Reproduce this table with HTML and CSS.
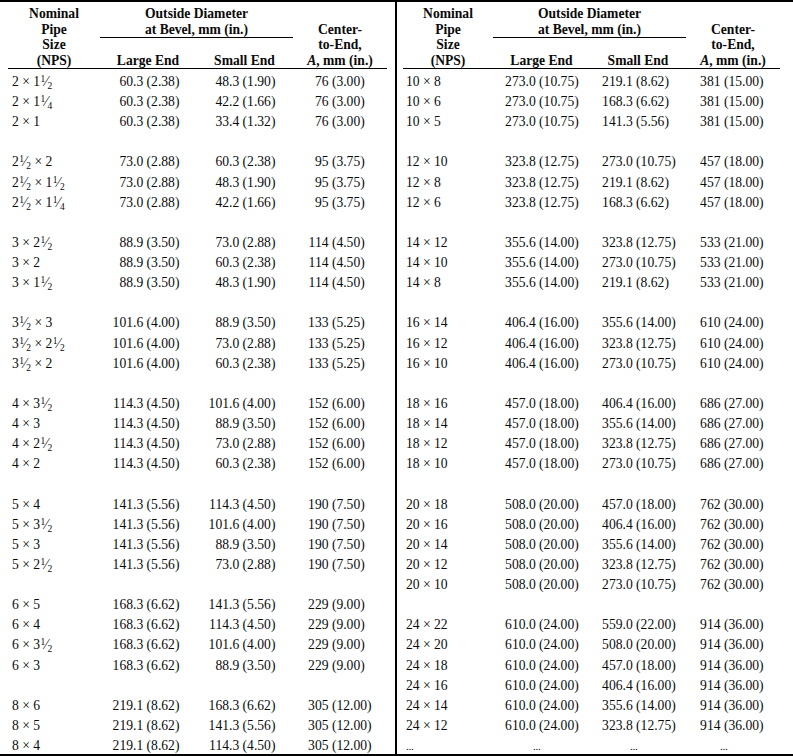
FILE: index.html
```html
<!DOCTYPE html>
<html>
<head>
<meta charset="utf-8">
<link rel="stylesheet" href="styles.css">
</head>
<body>
<div class="sheet">
  <div class="half left">
    <table class="tbl">
      <colgroup><col class="w1"><col class="w2"><col class="w3"><col class="w4"></colgroup>
      <thead>
        <tr class="r1">
          <th rowspan="2" class="hb">Nominal<br>Pipe<br>Size<br>(NPS)</th>
          <th colspan="2" class="grp">Outside Diameter<br>at Bevel, mm (in.)</th>
          <th rowspan="2" class="hb">Center-<br>to-End,<br><i>A</i>, mm (in.)</th>
        </tr>
        <tr class="r2"><th class="hb">Large End</th><th class="hb">Small End</th></tr>
      </thead>
      <tbody>
        <tr><td class="nps">2 × 1<span class="fr"><sup>1</sup>⁄<sub>2</sub></span></td><td class="n"><span class="i">60</span>.3 (2.38)</td><td class="n"><span class="i">48</span>.3 (1.90)</td><td class="n c"><span class="i">76</span> (3.00)</td></tr>
        <tr><td class="nps">2 × 1<span class="fr"><sup>1</sup>⁄<sub>4</sub></span></td><td class="n"><span class="i">60</span>.3 (2.38)</td><td class="n"><span class="i">42</span>.2 (1.66)</td><td class="n c"><span class="i">76</span> (3.00)</td></tr>
        <tr><td class="nps">2 × 1</td><td class="n"><span class="i">60</span>.3 (2.38)</td><td class="n"><span class="i">33</span>.4 (1.32)</td><td class="n c"><span class="i">76</span> (3.00)</td></tr>
        <tr><td></td><td></td><td></td><td></td></tr>
        <tr><td class="nps">2<span class="fr"><sup>1</sup>⁄<sub>2</sub></span> × 2</td><td class="n"><span class="i">73</span>.0 (2.88)</td><td class="n"><span class="i">60</span>.3 (2.38)</td><td class="n c"><span class="i">95</span> (3.75)</td></tr>
        <tr><td class="nps">2<span class="fr"><sup>1</sup>⁄<sub>2</sub></span> × 1<span class="fr"><sup>1</sup>⁄<sub>2</sub></span></td><td class="n"><span class="i">73</span>.0 (2.88)</td><td class="n"><span class="i">48</span>.3 (1.90)</td><td class="n c"><span class="i">95</span> (3.75)</td></tr>
        <tr><td class="nps">2<span class="fr"><sup>1</sup>⁄<sub>2</sub></span> × 1<span class="fr"><sup>1</sup>⁄<sub>4</sub></span></td><td class="n"><span class="i">73</span>.0 (2.88)</td><td class="n"><span class="i">42</span>.2 (1.66)</td><td class="n c"><span class="i">95</span> (3.75)</td></tr>
        <tr><td></td><td></td><td></td><td></td></tr>
        <tr><td class="nps">3 × 2<span class="fr"><sup>1</sup>⁄<sub>2</sub></span></td><td class="n"><span class="i">88</span>.9 (3.50)</td><td class="n"><span class="i">73</span>.0 (2.88)</td><td class="n c"><span class="i">114</span> (4.50)</td></tr>
        <tr><td class="nps">3 × 2</td><td class="n"><span class="i">88</span>.9 (3.50)</td><td class="n"><span class="i">60</span>.3 (2.38)</td><td class="n c"><span class="i">114</span> (4.50)</td></tr>
        <tr><td class="nps">3 × 1<span class="fr"><sup>1</sup>⁄<sub>2</sub></span></td><td class="n"><span class="i">88</span>.9 (3.50)</td><td class="n"><span class="i">48</span>.3 (1.90)</td><td class="n c"><span class="i">114</span> (4.50)</td></tr>
        <tr><td></td><td></td><td></td><td></td></tr>
        <tr><td class="nps">3<span class="fr"><sup>1</sup>⁄<sub>2</sub></span> × 3</td><td class="n"><span class="i">101</span>.6 (4.00)</td><td class="n"><span class="i">88</span>.9 (3.50)</td><td class="n c"><span class="i">133</span> (5.25)</td></tr>
        <tr><td class="nps">3<span class="fr"><sup>1</sup>⁄<sub>2</sub></span> × 2<span class="fr"><sup>1</sup>⁄<sub>2</sub></span></td><td class="n"><span class="i">101</span>.6 (4.00)</td><td class="n"><span class="i">73</span>.0 (2.88)</td><td class="n c"><span class="i">133</span> (5.25)</td></tr>
        <tr><td class="nps">3<span class="fr"><sup>1</sup>⁄<sub>2</sub></span> × 2</td><td class="n"><span class="i">101</span>.6 (4.00)</td><td class="n"><span class="i">60</span>.3 (2.38)</td><td class="n c"><span class="i">133</span> (5.25)</td></tr>
        <tr><td></td><td></td><td></td><td></td></tr>
        <tr><td class="nps">4 × 3<span class="fr"><sup>1</sup>⁄<sub>2</sub></span></td><td class="n"><span class="i">114</span>.3 (4.50)</td><td class="n"><span class="i">101</span>.6 (4.00)</td><td class="n c"><span class="i">152</span> (6.00)</td></tr>
        <tr><td class="nps">4 × 3</td><td class="n"><span class="i">114</span>.3 (4.50)</td><td class="n"><span class="i">88</span>.9 (3.50)</td><td class="n c"><span class="i">152</span> (6.00)</td></tr>
        <tr><td class="nps">4 × 2<span class="fr"><sup>1</sup>⁄<sub>2</sub></span></td><td class="n"><span class="i">114</span>.3 (4.50)</td><td class="n"><span class="i">73</span>.0 (2.88)</td><td class="n c"><span class="i">152</span> (6.00)</td></tr>
        <tr><td class="nps">4 × 2</td><td class="n"><span class="i">114</span>.3 (4.50)</td><td class="n"><span class="i">60</span>.3 (2.38)</td><td class="n c"><span class="i">152</span> (6.00)</td></tr>
        <tr><td></td><td></td><td></td><td></td></tr>
        <tr><td class="nps">5 × 4</td><td class="n"><span class="i">141</span>.3 (5.56)</td><td class="n"><span class="i">114</span>.3 (4.50)</td><td class="n c"><span class="i">190</span> (7.50)</td></tr>
        <tr><td class="nps">5 × 3<span class="fr"><sup>1</sup>⁄<sub>2</sub></span></td><td class="n"><span class="i">141</span>.3 (5.56)</td><td class="n"><span class="i">101</span>.6 (4.00)</td><td class="n c"><span class="i">190</span> (7.50)</td></tr>
        <tr><td class="nps">5 × 3</td><td class="n"><span class="i">141</span>.3 (5.56)</td><td class="n"><span class="i">88</span>.9 (3.50)</td><td class="n c"><span class="i">190</span> (7.50)</td></tr>
        <tr><td class="nps">5 × 2<span class="fr"><sup>1</sup>⁄<sub>2</sub></span></td><td class="n"><span class="i">141</span>.3 (5.56)</td><td class="n"><span class="i">73</span>.0 (2.88)</td><td class="n c"><span class="i">190</span> (7.50)</td></tr>
        <tr><td></td><td></td><td></td><td></td></tr>
        <tr><td class="nps">6 × 5</td><td class="n"><span class="i">168</span>.3 (6.62)</td><td class="n"><span class="i">141</span>.3 (5.56)</td><td class="n c"><span class="i">229</span> (9.00)</td></tr>
        <tr><td class="nps">6 × 4</td><td class="n"><span class="i">168</span>.3 (6.62)</td><td class="n"><span class="i">114</span>.3 (4.50)</td><td class="n c"><span class="i">229</span> (9.00)</td></tr>
        <tr><td class="nps">6 × 3<span class="fr"><sup>1</sup>⁄<sub>2</sub></span></td><td class="n"><span class="i">168</span>.3 (6.62)</td><td class="n"><span class="i">101</span>.6 (4.00)</td><td class="n c"><span class="i">229</span> (9.00)</td></tr>
        <tr><td class="nps">6 × 3</td><td class="n"><span class="i">168</span>.3 (6.62)</td><td class="n"><span class="i">88</span>.9 (3.50)</td><td class="n c"><span class="i">229</span> (9.00)</td></tr>
        <tr><td></td><td></td><td></td><td></td></tr>
        <tr><td class="nps">8 × 6</td><td class="n"><span class="i">219</span>.1 (8.62)</td><td class="n"><span class="i">168</span>.3 (6.62)</td><td class="n c"><span class="i">305</span> (12.00)</td></tr>
        <tr><td class="nps">8 × 5</td><td class="n"><span class="i">219</span>.1 (8.62)</td><td class="n"><span class="i">141</span>.3 (5.56)</td><td class="n c"><span class="i">305</span> (12.00)</td></tr>
        <tr><td class="nps">8 × 4</td><td class="n"><span class="i">219</span>.1 (8.62)</td><td class="n"><span class="i">114</span>.3 (4.50)</td><td class="n c"><span class="i">305</span> (12.00)</td></tr>
      </tbody>
    </table>
  </div>
  <div class="half right">
    <table class="tbl">
      <colgroup><col class="v1"><col class="v2"><col class="v3"><col class="v4"></colgroup>
      <thead>
        <tr class="r1">
          <th rowspan="2" class="hb">Nominal<br>Pipe<br>Size<br>(NPS)</th>
          <th colspan="2" class="grp">Outside Diameter<br>at Bevel, mm (in.)</th>
          <th rowspan="2" class="hb">Center-<br>to-End,<br><i>A</i>, mm (in.)</th>
        </tr>
        <tr class="r2"><th class="hb">Large End</th><th class="hb">Small End</th></tr>
      </thead>
      <tbody>
        <tr><td class="nps">10 × 8</td><td class="n"><span class="i">273</span>.0 (10.75)</td><td class="n"><span class="i">219</span>.1 (8.62)</td><td class="n c"><span class="i">381</span> (15.00)</td></tr>
        <tr><td class="nps">10 × 6</td><td class="n"><span class="i">273</span>.0 (10.75)</td><td class="n"><span class="i">168</span>.3 (6.62)</td><td class="n c"><span class="i">381</span> (15.00)</td></tr>
        <tr><td class="nps">10 × 5</td><td class="n"><span class="i">273</span>.0 (10.75)</td><td class="n"><span class="i">141</span>.3 (5.56)</td><td class="n c"><span class="i">381</span> (15.00)</td></tr>
        <tr><td></td><td></td><td></td><td></td></tr>
        <tr><td class="nps">12 × 10</td><td class="n"><span class="i">323</span>.8 (12.75)</td><td class="n"><span class="i">273</span>.0 (10.75)</td><td class="n c"><span class="i">457</span> (18.00)</td></tr>
        <tr><td class="nps">12 × 8</td><td class="n"><span class="i">323</span>.8 (12.75)</td><td class="n"><span class="i">219</span>.1 (8.62)</td><td class="n c"><span class="i">457</span> (18.00)</td></tr>
        <tr><td class="nps">12 × 6</td><td class="n"><span class="i">323</span>.8 (12.75)</td><td class="n"><span class="i">168</span>.3 (6.62)</td><td class="n c"><span class="i">457</span> (18.00)</td></tr>
        <tr><td></td><td></td><td></td><td></td></tr>
        <tr><td class="nps">14 × 12</td><td class="n"><span class="i">355</span>.6 (14.00)</td><td class="n"><span class="i">323</span>.8 (12.75)</td><td class="n c"><span class="i">533</span> (21.00)</td></tr>
        <tr><td class="nps">14 × 10</td><td class="n"><span class="i">355</span>.6 (14.00)</td><td class="n"><span class="i">273</span>.0 (10.75)</td><td class="n c"><span class="i">533</span> (21.00)</td></tr>
        <tr><td class="nps">14 × 8</td><td class="n"><span class="i">355</span>.6 (14.00)</td><td class="n"><span class="i">219</span>.1 (8.62)</td><td class="n c"><span class="i">533</span> (21.00)</td></tr>
        <tr><td></td><td></td><td></td><td></td></tr>
        <tr><td class="nps">16 × 14</td><td class="n"><span class="i">406</span>.4 (16.00)</td><td class="n"><span class="i">355</span>.6 (14.00)</td><td class="n c"><span class="i">610</span> (24.00)</td></tr>
        <tr><td class="nps">16 × 12</td><td class="n"><span class="i">406</span>.4 (16.00)</td><td class="n"><span class="i">323</span>.8 (12.75)</td><td class="n c"><span class="i">610</span> (24.00)</td></tr>
        <tr><td class="nps">16 × 10</td><td class="n"><span class="i">406</span>.4 (16.00)</td><td class="n"><span class="i">273</span>.0 (10.75)</td><td class="n c"><span class="i">610</span> (24.00)</td></tr>
        <tr><td></td><td></td><td></td><td></td></tr>
        <tr><td class="nps">18 × 16</td><td class="n"><span class="i">457</span>.0 (18.00)</td><td class="n"><span class="i">406</span>.4 (16.00)</td><td class="n c"><span class="i">686</span> (27.00)</td></tr>
        <tr><td class="nps">18 × 14</td><td class="n"><span class="i">457</span>.0 (18.00)</td><td class="n"><span class="i">355</span>.6 (14.00)</td><td class="n c"><span class="i">686</span> (27.00)</td></tr>
        <tr><td class="nps">18 × 12</td><td class="n"><span class="i">457</span>.0 (18.00)</td><td class="n"><span class="i">323</span>.8 (12.75)</td><td class="n c"><span class="i">686</span> (27.00)</td></tr>
        <tr><td class="nps">18 × 10</td><td class="n"><span class="i">457</span>.0 (18.00)</td><td class="n"><span class="i">273</span>.0 (10.75)</td><td class="n c"><span class="i">686</span> (27.00)</td></tr>
        <tr><td></td><td></td><td></td><td></td></tr>
        <tr><td class="nps">20 × 18</td><td class="n"><span class="i">508</span>.0 (20.00)</td><td class="n"><span class="i">457</span>.0 (18.00)</td><td class="n c"><span class="i">762</span> (30.00)</td></tr>
        <tr><td class="nps">20 × 16</td><td class="n"><span class="i">508</span>.0 (20.00)</td><td class="n"><span class="i">406</span>.4 (16.00)</td><td class="n c"><span class="i">762</span> (30.00)</td></tr>
        <tr><td class="nps">20 × 14</td><td class="n"><span class="i">508</span>.0 (20.00)</td><td class="n"><span class="i">355</span>.6 (14.00)</td><td class="n c"><span class="i">762</span> (30.00)</td></tr>
        <tr><td class="nps">20 × 12</td><td class="n"><span class="i">508</span>.0 (20.00)</td><td class="n"><span class="i">323</span>.8 (12.75)</td><td class="n c"><span class="i">762</span> (30.00)</td></tr>
        <tr><td class="nps">20 × 10</td><td class="n"><span class="i">508</span>.0 (20.00)</td><td class="n"><span class="i">273</span>.0 (10.75)</td><td class="n c"><span class="i">762</span> (30.00)</td></tr>
        <tr><td></td><td></td><td></td><td></td></tr>
        <tr><td class="nps">24 × 22</td><td class="n"><span class="i">610</span>.0 (24.00)</td><td class="n"><span class="i">559</span>.0 (22.00)</td><td class="n c"><span class="i">914</span> (36.00)</td></tr>
        <tr><td class="nps">24 × 20</td><td class="n"><span class="i">610</span>.0 (24.00)</td><td class="n"><span class="i">508</span>.0 (20.00)</td><td class="n c"><span class="i">914</span> (36.00)</td></tr>
        <tr><td class="nps">24 × 18</td><td class="n"><span class="i">610</span>.0 (24.00)</td><td class="n"><span class="i">457</span>.0 (18.00)</td><td class="n c"><span class="i">914</span> (36.00)</td></tr>
        <tr><td class="nps">24 × 16</td><td class="n"><span class="i">610</span>.0 (24.00)</td><td class="n"><span class="i">406</span>.4 (16.00)</td><td class="n c"><span class="i">914</span> (36.00)</td></tr>
        <tr><td class="nps">24 × 14</td><td class="n"><span class="i">610</span>.0 (24.00)</td><td class="n"><span class="i">355</span>.6 (14.00)</td><td class="n c"><span class="i">914</span> (36.00)</td></tr>
        <tr><td class="nps">24 × 12</td><td class="n"><span class="i">610</span>.0 (24.00)</td><td class="n"><span class="i">323</span>.8 (12.75)</td><td class="n c"><span class="i">914</span> (36.00)</td></tr>
        <tr class="more"><td class="nps"><span class="dots">...</span></td><td class="e2"><span class="dots">...</span></td><td class="e2"><span class="dots">...</span></td><td class="e4"><span class="dots">...</span></td></tr>
      </tbody>
    </table>
  </div>
</div>
</body>
</html>
```

FILE: styles.css
```css
* { box-sizing: border-box; }
html, body { margin: 0; padding: 0; background: #fff; }
body {
  width: 793px;
  height: 756px;
  overflow: hidden;
  font-family: "Liberation Serif", "Times New Roman", serif;
  font-size: 13.6px;
  color: #0a0a0a;
}
.sheet {
  display: flex;
  width: 793px;
  border-top: 2px solid #000;
  border-bottom: 2px solid #000;
}
.half.left {
  width: 397px;
  padding: 0 8px 0 8px;
  border-right: 2px solid #000;
}
.half.right {
  flex: 1;
  padding: 0 13px 0 6px;
}
.tbl {
  border-collapse: separate;
  border-spacing: 0;
  table-layout: fixed;
  width: 100%;
}
.w1 { width: 92px; } .w2 { width: 96px; } .w3 { width: 97px; } .w4 { width: 94px; }
.v1 { width: 90px; } .v2 { width: 97px; } .v3 { width: 96px; } .v4 { width: 94px; }

th {
  font-weight: bold;
  line-height: 15.5px;
  padding: 0;
  text-align: center;
  white-space: nowrap;
}
tr.r1 { height: 36px; }
tr.r2 { height: 31px; }
th.grp {
  vertical-align: top;
  padding-top: 4px;
  border-bottom: 1px solid #000;
}
th.hb {
  vertical-align: bottom;
  border-bottom: 1px solid #000;
}
tbody tr { height: 20.12px; }
td {
  padding: 5px 0 0 0;
  line-height: 15.12px;
  white-space: nowrap;
  vertical-align: top;
}
.left td.nps { padding-left: 4px; }
.right td.nps { padding-left: 3px; }
.n .i {
  display: inline-block;
  width: 33px;
  text-align: right;
}
.n.c .i { width: 35.5px; }
.right .n .i { width: 32.5px; }
.right .n.c .i { width: 34.5px; }

.fr { white-space: nowrap; }
.fr sup, .fr sub {
  font-size: 9.5px;
  line-height: 0;
}
.fr sup { vertical-align: 4px; margin-left: 0.5px; }
.fr sub { vertical-align: -2.5px; }

.dots { font-size: 11px; letter-spacing: -0.3px; }
td.e2 { padding-left: 40px; }
td.e4 { padding-left: 34px; }
```
